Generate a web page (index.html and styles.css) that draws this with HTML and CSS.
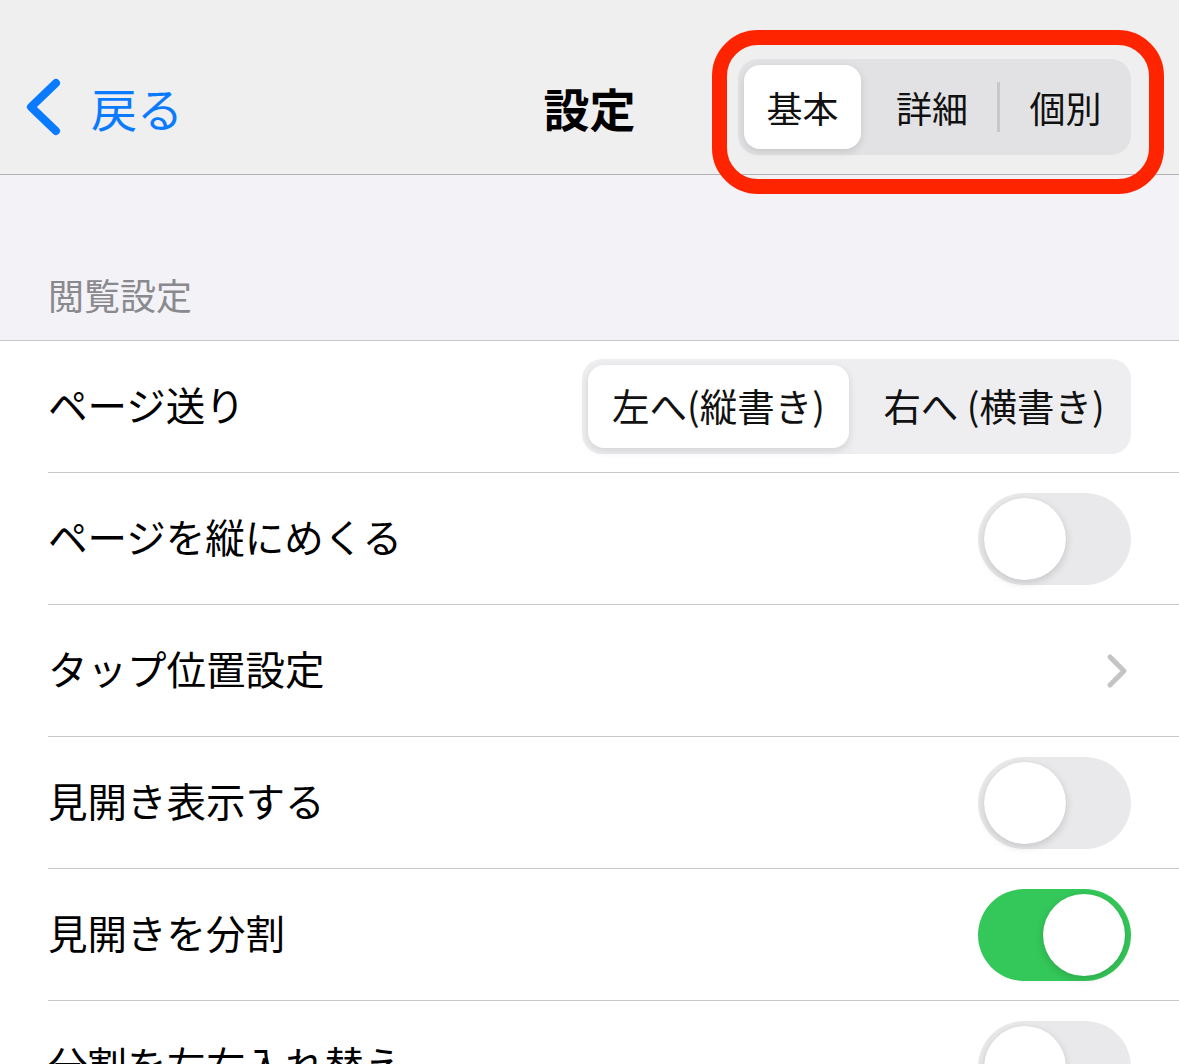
FILE: index.html
```html
<!DOCTYPE html>
<html lang="ja">
<head>
    <meta charset="UTF-8">
    <meta name="viewport" content="width=device-width, initial-scale=1.0">
    <title>設定</title>
    <link rel="stylesheet" href="styles.css">
</head>
<body>
    <!-- Navigation bar -->
    <header class="nav-bar">
        <a class="back-btn" href="#">
            <svg class="back-icon" width="40" height="60" viewBox="0 0 40 60">
                <polyline points="31,6 6,30 31,54" fill="none" stroke="#0a7aff" stroke-width="8" stroke-linecap="round" stroke-linejoin="round"/>
            </svg>
            <span>戻る</span>
        </a>
        <h1 class="nav-title">設定</h1>
        <div class="nav-seg">
            <div class="nav-seg-item nav-seg-active">基本</div>
            <div class="nav-seg-item nav-seg-mid">詳細</div>
            <div class="nav-seg-item nav-seg-last">個別</div>
        </div>
    </header>

    <!-- Highlight annotation -->
    <div class="highlight"></div>

    <section class="group-header">閲覧設定</section>

    <div class="list">
        <div class="row">
            <span class="row-label">ページ送り</span>
            <div class="row-seg">
                <div class="row-seg-item row-seg-active">左へ(縦書き)</div>
                <div class="row-seg-item row-seg-right">右へ (横書き)</div>
            </div>
        </div>
        <div class="row">
            <span class="row-label">ページを縦にめくる</span>
            <div class="toggle"><div class="knob"></div></div>
        </div>
        <div class="row">
            <span class="row-label">タップ位置設定</span>
            <svg class="chevron" width="24" height="36" viewBox="0 0 24 36">
                <polyline points="5,4 19,18 5,32" fill="none" stroke="#c4c4c7" stroke-width="5" stroke-linecap="round" stroke-linejoin="round"/>
            </svg>
        </div>
        <div class="row">
            <span class="row-label">見開き表示する</span>
            <div class="toggle"><div class="knob"></div></div>
        </div>
        <div class="row">
            <span class="row-label">見開きを分割</span>
            <div class="toggle toggle-on"><div class="knob"></div></div>
        </div>
        <div class="row">
            <span class="row-label">分割を左右入れ替え</span>
            <div class="toggle"><div class="knob"></div></div>
        </div>
    </div>
</body>
</html>
```

FILE: styles.css
```css
body {
    margin: 0;
    width: 1179px;
    height: 1064px;
    overflow: hidden;
    position: relative;
    font-family: "Noto Sans CJK JP", "Noto Sans", sans-serif;
    background-color: #fff;
    color: #000;
}
.nav-bar {
    display: grid;
    grid-template-columns: 1fr auto 1fr;
    align-items: center;
    height: 134px;
    padding-top: 40px;
    background-color: #f0eff0;
    border-bottom: 1px solid #b3b3b6;
}
.back-btn {
    display: flex;
    align-items: center;
    gap: 26px;
    padding-left: 25px;
    color: #0a7aff;
    text-decoration: none;
    font-size: 46px;
    line-height: 1;
}
.back-icon {
    display: block;
}
.nav-title {
    margin: 0;
    font-size: 46px;
    font-weight: 700;
    line-height: 1;
}
.nav-seg {
    justify-self: end;
    margin-right: 48px;
    display: flex;
    align-items: center;
    height: 84px;
    padding: 6px;
    border-radius: 20px;
    background-color: #e2e2e4;
}
.nav-seg-item {
    height: 84px;
    display: flex;
    align-items: center;
    justify-content: center;
    font-size: 36px;
    color: #111;
}
.nav-seg-active {
    width: 117px;
    background-color: #fff;
    border-radius: 16px;
    box-shadow: 0 3px 8px rgba(0, 0, 0, 0.12);
}
.nav-seg-mid {
    width: 139px;
    padding-left: 6px;
    box-sizing: border-box;
    border-right: 3px solid #c8c8cb;
    height: 50px;
}
.nav-seg-last {
    width: 125px;
    padding-left: 6px;
    box-sizing: border-box;
}
.highlight {
    position: absolute;
    left: 712px;
    top: 30px;
    width: 452px;
    height: 164px;
    box-sizing: border-box;
    border: 15px solid #ff2400;
    border-radius: 46px;
}
.group-header {
    padding: 98px 48px 25px;
    background-color: #f2f2f7;
    border-bottom: 1px solid #c8c8cc;
    font-size: 36px;
    line-height: 42px;
    color: #8a8a8e;
}
.list {
    background-color: #fff;
}
.row {
    display: flex;
    align-items: center;
    justify-content: space-between;
    height: 131px;
    margin-left: 48px;
    padding-right: 48px;
    border-bottom: 1px solid #c8c8cc;
}
.row-label {
    font-size: 39.5px;
    line-height: 1;
    padding-bottom: 6px;
}
.row-seg {
    display: flex;
    width: 537px;
    height: 83px;
    padding: 6px;
    border-radius: 20px;
    background-color: #eeeef0;
}
.row-seg-item {
    display: flex;
    align-items: center;
    justify-content: center;
    flex: 1;
    font-size: 37.5px;
    color: #111;
    padding-bottom: 4px;
    box-sizing: border-box;
}
.row-seg-right {
    padding-left: 14px;
}
.row-seg-active {
    flex: 0 0 261px;
    background-color: #fff;
    border-radius: 16px;
    box-shadow: 0 3px 8px rgba(0, 0, 0, 0.12);
}
.chevron {
    display: block;
    margin-right: 2px;
}
.toggle {
    width: 153px;
    height: 92px;
    border-radius: 46px;
    background-color: #e9e9eb;
    position: relative;
}
.knob {
    position: absolute;
    top: 5px;
    left: 6px;
    width: 82px;
    height: 82px;
    border-radius: 50%;
    background-color: #fff;
    box-shadow: 0 3px 8px rgba(0, 0, 0, 0.15), 0 0 1px rgba(0, 0, 0, 0.1);
}
.toggle-on {
    background-color: #34c759;
}
.toggle-on .knob {
    left: 65px;
}
```
